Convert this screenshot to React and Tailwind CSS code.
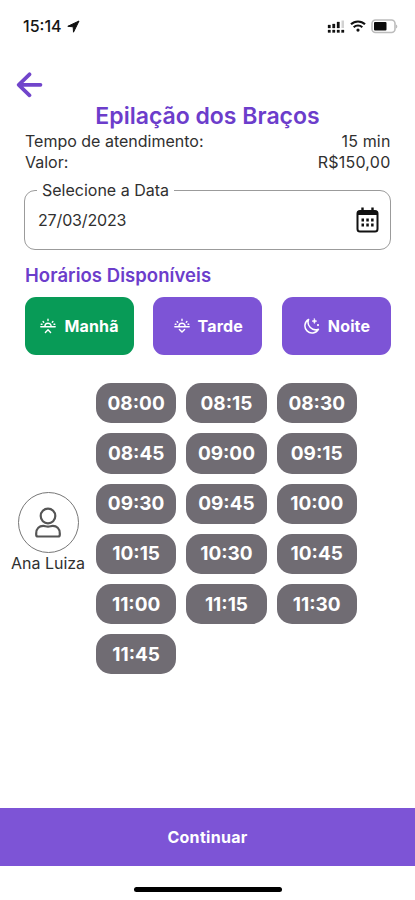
const slots = [
  '08:00', '08:15', '08:30', '08:45', '09:00', '09:15', '09:30', '09:45',
  '10:00', '10:15', '10:30', '10:45', '11:00', '11:15', '11:30', '11:45',
];

function StatusBar() {
  return (
    <header className="flex h-[52px] items-center justify-between pr-[17px] pl-[23px]">
      <div className="flex items-center gap-[5px]">
        <span className="text-[16px] leading-5 font-medium text-[#151515]">15:14</span>
        <svg width="13" height="13" viewBox="0 0 13 13" fill="#111" stroke="#111" strokeLinejoin="round">
          <path d="M12 1 .8 6.300l5.400.5.300 5.400z" />
        </svg>
      </div>
      <div className="flex items-center gap-[5px]">
        <svg width="18" height="13" viewBox="0 0 18 13" fill="#111">
          <path d="M1 5h2.500v3H1zM5.500 4H8v4H5.500zM10 2h2.500v6H10zM1 10h2.500v2.500H1zM5.500 10H8v2.500H5.500zM10 10h2.500v2.500H10zM14.500 10H17v2.500h-2.500z" stroke="#111" strokeWidth=".3" />
          <path d="M14.500.5H17V8h-2.500z" fill="#d2d2d2" />
        </svg>
        <svg width="16" height="12" viewBox="0 0 16 12" fill="none" stroke="#111" strokeWidth="2.100">
          <path d="M1 4.300a10 10 0 0 1 14 0M3.700 7.200a6.200 6.200 0 0 1 8.600 0" />
          <circle cx="8" cy="10.100" r="1.600" fill="#111" stroke="none" />
        </svg>
        <svg width="27" height="15" viewBox="0 0 27 15">
          <rect x="1" y="1" width="23" height="12.500" rx="3.500" fill="#fff" stroke="#bcbcbc" strokeWidth="1.600" />
          <rect x="3" y="3" width="12.500" height="8.500" rx="1" fill="#0b0b0b" />
          <path d="M25 5.500v4c1.800-.6 1.800-3.400 0-4z" fill="#bcbcbc" />
        </svg>
      </div>
    </header>
  );
}

function SunIcon({ down }) {
  return (
    <svg width="16" height="16" viewBox="0 0 16 16" fill="none" stroke="#fff" strokeWidth="1.400" strokeLinecap="round" strokeLinejoin="round">
      <path d="M.8 8.800h14.400M4.900 8.300a3.100 3.100 0 0 1 6.200 0M8 1.300v1.200M3.100 3.600l.6.600M12.900 3.600l-.6.600M1.200 6.300h.8M14 6.300h.8" />
      <path d={down ? 'm5.400 11.500 2.600 2.600 2.600-2.600' : 'M5.400 14.400 8 11.800l2.600 2.600'} />
    </svg>
  );
}

function MoonIcon() {
  return (
    <svg width="16" height="16" viewBox="0 0 16 16" fill="none" stroke="#fff" strokeWidth="1.500" strokeLinecap="round" strokeLinejoin="round">
      <path d="M4.600 1.500a7.200 7.200 0 1 0 9.800 9.800A7.600 7.600 0 0 1 4.600 1.500z" />
      <path d="m10.400.7.700 1.700 1.700.7-1.700.7-.7 1.700-.7-1.700L8 3.100l1.700-.7z" fill="#fff" strokeWidth=".6" />
      <path d="M14 7v.1" strokeWidth="2.200" />
    </svg>
  );
}

function Period({ label, icon, active }) {
  return (
    <button className={`flex h-[58px] w-[109px] items-center justify-center gap-2 rounded-[11px] pl-px text-white ${active ? 'bg-[#089b57]' : 'bg-[#7d54d6]'}`}>
      {icon}
      <span className="text-[16px] leading-5 font-bold tracking-[0.15px]">{label}</span>
    </button>
  );
}

export default function App() {
  return (
    <div className="flex h-[900px] w-[415px] flex-col overflow-hidden bg-white font-['Inter',sans-serif] text-[#303030]">
      <StatusBar />
      <div className="flex h-[52px] items-start pt-5 pl-4">
        <svg width="27" height="26" viewBox="0 0 27 26" fill="none" stroke="#7145cb" strokeWidth="3.700" strokeLinecap="round" strokeLinejoin="round">
          <path d="M13.500 2.300 2.700 12.800l10.800 10.500M3 12.800h21.500" />
        </svg>
      </div>
      <main className="flex h-[704px] flex-col">
        <h1 className="h-[27px] text-center text-[23px] leading-6 font-semibold whitespace-nowrap text-[#6c3dcb]">Epilação dos Braços</h1>
        <div className="flex flex-col pr-[24.500px] pl-[25px] text-[16px] leading-[20.500px]">
          <div className="flex justify-between"><span>Tempo de atendimento:</span><span className="tracking-[0.15px]">15 min</span></div>
          <div className="flex justify-between"><span>Valor:</span><span className="tracking-[0.25px]">R$150,00</span></div>
        </div>
        <fieldset className="mx-[24px] mt-[8px] h-[70px] rounded-[11px] border border-[#9b9b9b] pr-[11px] pl-[11px]">
          <legend className="ml-px px-[5px] text-[16px] leading-[20px]">Selecione a Data</legend>
          <div className="flex h-[40px] items-center justify-between pl-[2px]">
            <span className="text-[16px] tracking-[-0.15px]">27/03/2023</span>
            <svg width="23" height="26" viewBox="0 0 23 26" fill="none" stroke="#111" strokeWidth="2">
              <rect x="1.500" y="4" width="20" height="20.500" rx="2.500" />
              <path d="M1.500 5.500h20M1.500 7h20" />
              <path d="M6.500.5v4M16.500.5v4" strokeWidth="2.400" />
              <path d="M5.500 13H8M10.300 13h2.500M15.100 13h2.500M5.500 18H8M10.300 18h2.500M15.100 18h2.500" strokeWidth="3" />
            </svg>
          </div>
        </fieldset>
        <h2 className="mt-[13px] pl-[25px] text-[18.500px] leading-6 font-semibold tracking-[0.05px] text-[#6c3dcb]">Horários Disponíveis</h2>
        <div className="mt-[10px] flex justify-between pr-[24px] pl-[24.500px]">
          <Period label="Manhã" icon={<SunIcon />} active />
          <Period label="Tarde" icon={<SunIcon down />} />
          <Period label="Noite" icon={<MoonIcon />} />
        </div>
        <section className="mt-[28.300px] flex items-center">
          <div className="flex w-24 flex-col items-center pt-[9px]">
            <div className="flex size-[61px] items-center justify-center rounded-full border border-[#777]">
              <svg width="28" height="32" viewBox="0 0 28 32" fill="none" stroke="#555" strokeWidth="2.200">
                <circle cx="14" cy="9" r="7.300" />
                <path d="M2.200 26.500c0-5 3.300-7.600 7-7.600 1.800 0 2.700.8 4.800.8s3-.8 4.800-.8c3.700 0 7 2.600 7 7.600v1.200c0 1-.7 1.800-1.800 1.800H4c-1.100 0-1.800-.8-1.800-1.800z" />
              </svg>
            </div>
            <span className="text-[16px] leading-[21px] whitespace-nowrap">Ana Luiza</span>
          </div>
          <div className="grid grid-cols-3 gap-x-[10px] gap-y-[10px]">
            {slots.map((slot) => (
              <button key={slot} className="h-[40.200px] w-[80.300px] rounded-[15px] bg-[#706c73] pt-px text-[19px] leading-6 font-bold text-white">{slot}</button>
            ))}
          </div>
        </section>
      </main>
      <button className="h-[58px] shrink-0 bg-[#7d54d6] text-[16px] font-bold tracking-[0.3px] text-white">Continuar</button>
      <div className="flex h-[34px] justify-center pt-[21px]">
        <div className="h-[5px] w-[148px] rounded-full bg-black" />
      </div>
    </div>
  );
}
